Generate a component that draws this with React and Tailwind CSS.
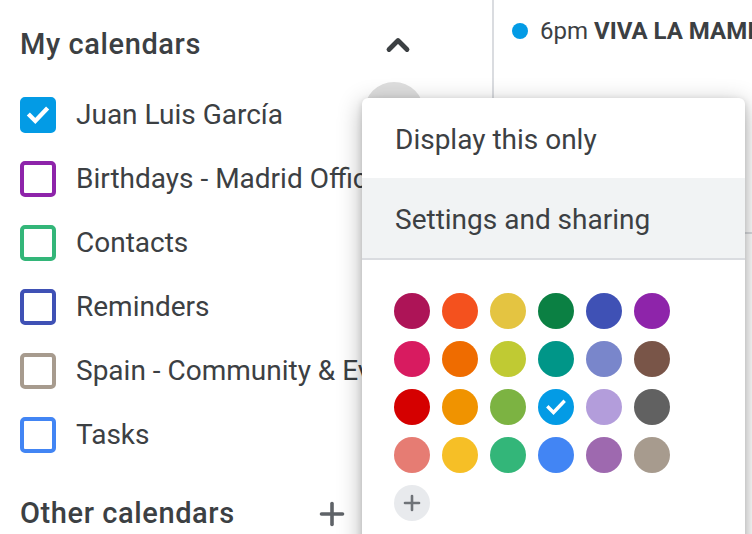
import { Plus, ChevronUp } from "lucide-react";

const CALS = [
  ["Juan Luis García", "#039be5", true],
  ["Birthdays - Madrid Office", "#8e24aa", false],
  ["Contacts", "#33b679", false],
  ["Reminders", "#3f51b5", false],
  ["Spain - Community & Events", "#a79b8e", false],
  ["Tasks", "#4285f4", false],
];

const COLORS = [
  ["#ad1457", "#f4511e", "#e4c441", "#0b8043", "#3f51b5", "#8e24aa"],
  ["#d81b60", "#ef6c00", "#c0ca33", "#009688", "#7986cb", "#795548"],
  ["#d50000", "#f09300", "#7cb342", "#039be5", "#b39ddb", "#616161"],
  ["#e67c73", "#f6bf26", "#33b679", "#4285f4", "#9e69af", "#a79b8e"],
];

function Check({ size = 26, width = 4 }) {
  return (
    <svg width={size} height={size} viewBox="0 0 24 24" fill="none">
      <path d="M4.5 12.5l5 5L19.5 7" stroke="white" strokeWidth={width} strokeLinecap="square" />
    </svg>
  );
}

export default function App() {
  return (
    <div className="relative w-[752px] h-[534px] overflow-hidden bg-white flex text-[#3c4043]" style={{ fontFamily: "Roboto, 'Noto Sans', sans-serif" }}>
      {/* Sidebar */}
      <div className="w-[494px] shrink-0 border-r-2 border-[#dadce0] overflow-hidden whitespace-nowrap">
        <div className="h-[64px] mt-[13px] pl-[20px] pr-[76px] flex items-center justify-between">
          <span className="text-[29px] font-medium tracking-[0.6px]">My calendars</span>
          <ChevronUp className="w-[36px] h-[36px] text-[#3c4043]" strokeWidth={3.2} />
        </div>
        <div className="mt-[6px]">
          {CALS.map(([name, color, on]) => (
            <div key={name} className="h-[64px] pl-[20px] flex items-center gap-[20px]">
              <div
                className="w-[36px] h-[36px] shrink-0 rounded-[5px] border-[4px] flex items-center justify-center"
                style={{ borderColor: color, background: on ? color : "white" }}
              >
                {on && <Check />}
              </div>
              <span className="text-[28px]">{name}</span>
            </div>
          ))}
        </div>
        <div className="h-[64px] mt-[15px] pl-[20px] pr-[142px] flex items-center justify-between">
          <span className="text-[29px] font-medium tracking-[0.6px]">Other calendars</span>
          <Plus className="w-[36px] h-[36px] text-[#5f6368]" strokeWidth={2.4} />
        </div>
      </div>

      {/* Calendar area */}
      <div className="flex-1 flex flex-col overflow-hidden">
        <div className="h-[234px] border-b-2 border-[#dadce0] pl-[18px] pt-[13px]">
          <div className="flex items-center gap-[12px] whitespace-nowrap text-[24px]">
            <span className="w-[16px] h-[16px] rounded-full bg-[#039be5] shrink-0" />
            <span>6pm <span className="font-bold">VIVA LA MAMI</span></span>
          </div>
        </div>
      </div>

      {/* hover circle behind menu */}
      <div className="absolute left-[364px] top-[82px] w-[60px] h-[60px] rounded-full bg-[#dedede]" />

      {/* Menu */}
      <div className="absolute left-[362px] top-[98px] w-[383px] h-[460px] bg-white rounded-[6px] shadow-[0_6px_24px_rgba(0,0,0,0.3),0_2px_6px_rgba(0,0,0,0.15)]">
        <div className="h-[80px] pl-[33px] pt-[3px] flex items-center text-[28px]">Display this only</div>
        <div className="h-[80px] pl-[33px] pt-[3px] flex items-center text-[28px] bg-[#f1f3f4]">Settings and sharing</div>
        <div className="h-[2px] bg-[#dadce0]" />
        <div className="pl-[32px] pt-[33px] flex flex-col gap-[12px]">
          {COLORS.map((row, i) => (
            <div key={i} className="flex gap-[12px]">
              {row.map((c) => (
                <div key={c} className="w-[36px] h-[36px] rounded-full flex items-center justify-center" style={{ background: c }}>
                  {c === "#039be5" && i === 2 && <Check size={24} width={3.4} />}
                </div>
              ))}
            </div>
          ))}
          <div className="w-[36px] h-[36px] rounded-full bg-[#e8eaed] flex items-center justify-center">
            <Plus className="w-[24px] h-[24px] text-[#6f7378]" strokeWidth={2.6} />
          </div>
        </div>
      </div>
    </div>
  );
}
